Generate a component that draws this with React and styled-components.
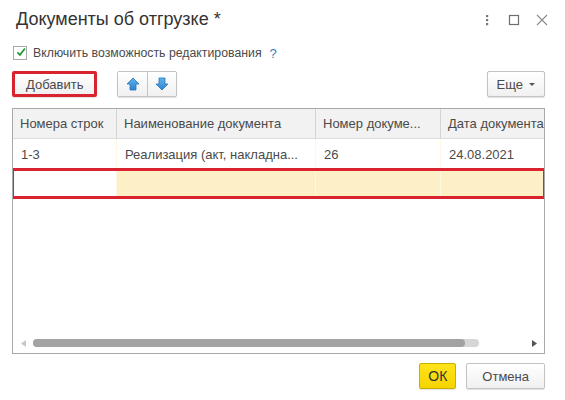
import styled, { createGlobalStyle } from "styled-components";

const Global = createGlobalStyle`
  body {
    margin: 0;
    background: #fff;
    font-family: "Liberation Sans", Arial, sans-serif;
  }
`;

const Dialog = styled.div`
  width: 565px;
  height: 400px;
  box-sizing: border-box;
  padding: 0 20px 0 12px;
  display: flex;
  flex-direction: column;
  background: #fff;
  color: #4a4a4a;
  font-size: 13px;
`;

const TitleBar = styled.div`
  height: 40px;
  display: flex;
  align-items: center;
  justify-content: space-between;
  padding-left: 4px;
`;

const Title = styled.h1`
  margin: 0;
  font-size: 18px;
  font-weight: 400;
  color: #333;
  padding-bottom: 2px;
`;

const WindowIcons = styled.div`
  display: flex;
  align-items: center;
  gap: 14px;
  margin-right: -4px;
  svg {
    display: block;
  }
`;

const CheckRow = styled.label`
  display: flex;
  align-items: center;
  height: 24px;
  gap: 6px;
  margin-top: 1px;
  font-size: 12.3px;
`;

const Box = styled.span`
  width: 12px;
  height: 12px;
  border: 1px solid #a8a8a8;
  background: #fff;
  display: flex;
  align-items: center;
  justify-content: center;
  margin-left: 1px;
`;

const Help = styled.span`
  color: #2d7cc0;
  margin-left: 2px;
  font-size: 13px;
`;

const Toolbar = styled.div`
  display: flex;
  align-items: center;
  height: 26px;
  margin-top: 6px;
`;

const Button = styled.button`
  height: 26px;
  box-sizing: border-box;
  border: ${(p) => (p.$marked ? "3px solid #d9232e" : "1px solid #c3c3c3")};
  border-radius: 2px;
  background: linear-gradient(#ffffff, #f0f0f0);
  box-shadow: 0 1px 1px rgba(0, 0, 0, 0.12);
  font-family: inherit;
  font-size: 13px;
  color: #4a4a4a;
  padding: 0 ${(p) => (p.$marked ? "11px" : "9px")};
  display: flex;
  align-items: center;
  gap: 6px;
  cursor: pointer;
`;

const Group = styled.div`
  display: flex;
  margin-left: 20px;
  height: 24px;
  border: 1px solid #c3c3c3;
  border-radius: 2px;
  box-shadow: 0 1px 1px rgba(0, 0, 0, 0.12);
`;

const IconBtn = styled.button`
  width: 29px;
  border: none;
  background: linear-gradient(#ffffff, #f0f0f0);
  padding: 0;
  display: flex;
  align-items: center;
  justify-content: center;
  & + & {
    border-left: 1px solid #c3c3c3;
  }
`;

const Spacer = styled.div`
  flex: 1;
`;

const Table = styled.div`
  margin-top: 11px;
  height: 246px;
  box-sizing: border-box;
  border: 1px solid #a9a9a9;
  display: flex;
  flex-direction: column;
  overflow: hidden;
`;

const cols = "103px 199px 125px 110px";

const HeadRow = styled.div`
  display: grid;
  grid-template-columns: ${cols};
  height: 29px;
  background: #f2f2f2;
  border-bottom: 1px solid #dcdcdc;
`;

const HeadCell = styled.div`
  display: flex;
  align-items: center;
  padding-left: 7px;
  white-space: nowrap;
  overflow: hidden;
  & + & {
    border-left: 1px solid #d4d4d4;
  }
`;

const Row = styled.div`
  display: grid;
  grid-template-columns: ${cols};
  height: 30px;
  position: relative;
  ${(p) =>
    p.$marked &&
    `
    height: 29px;
    outline: 3px solid #d9232e;
    outline-offset: -2px;
    margin: 0 -1px;
    grid-template-columns: 104px 199px 125px 110px;
  `}
`;

const Cell = styled.div`
  display: flex;
  align-items: center;
  padding-left: 8px;
  white-space: nowrap;
  overflow: hidden;
  background: ${(p) => (p.$yellow ? "#fdf0c6" : "#fff")};
  & + & {
    border-left: 1px solid ${(p) => (p.$yellow ? "#fff8e2" : "#fff")};
  }
`;

const Body = styled.div`
  flex: 1;
`;

const Scroll = styled.div`
  height: 20px;
  display: flex;
  align-items: center;
  padding: 0 7px 0 8px;
  gap: 7px;
`;

const Track = styled.div`
  flex: 1;
  height: 8px;
  margin-right: 46px;
  border-radius: 4px;
  background: #d6d6d6;
  display: flex;
`;

const Thumb = styled.div`
  width: 432px;
  height: 8px;
  border-radius: 4px;
  background: #a3a3a3;
`;

const Footer = styled.div`
  display: flex;
  justify-content: flex-end;
  gap: 10px;
  margin-top: 9px;
`;

const FooterBtn = styled(Button)`
  height: 26px;
  padding: 0 ${(p) => (p.$primary ? "8px" : "15px")};
  font-size: ${(p) => (p.$primary ? "14px" : "13px")};
  ${(p) =>
    p.$primary &&
    `
    background: linear-gradient(#ffe31a, #f5d400);
    border-color: #c9b000;
    color: #333;
  `}
`;

const Arrow = ({ down }) => (
  <svg width="14" height="14" viewBox="0 0 14 14">
    <defs>
      <linearGradient id={down ? "gd" : "gu"} x1="0" y1="0" x2="0" y2="1">
        <stop offset="0" stopColor="#63b4ec" />
        <stop offset="1" stopColor="#2a83cf" />
      </linearGradient>
    </defs>
    <polygon
      points={down ? "4,1 10,1 10,7 13,7 7,13 1,7 4,7" : "7,1 13,7 10,7 10,13 4,13 4,7 1,7"}
      fill={`url(#${down ? "gd" : "gu"})`}
      stroke="#2376bd"
      strokeWidth="0.8"
    />
  </svg>
);

export default function App() {
  return (
    <>
      <Global />
      <Dialog>
        <TitleBar>
          <Title>Документы об отгрузке *</Title>
          <WindowIcons>
            <svg width="12" height="14" viewBox="0 0 12 14">
              <rect x="5" y="2" width="2.2" height="2.2" fill="#777" />
              <rect x="5" y="6" width="2.2" height="2.2" fill="#777" />
              <rect x="5" y="10" width="2.2" height="2.2" fill="#777" />
            </svg>
            <svg width="14" height="14" viewBox="0 0 14 14">
              <rect x="2.5" y="2.5" width="9" height="9" fill="none" stroke="#6e6e6e" strokeWidth="1.2" />
            </svg>
            <svg width="14" height="14" viewBox="0 0 14 14">
              <path d="M2 2 L12 12 M12 2 L2 12" stroke="#8a8a8a" strokeWidth="1.1" />
            </svg>
          </WindowIcons>
        </TitleBar>

        <CheckRow>
          <Box>
            <svg width="14" height="14" viewBox="0 0 14 14" style={{ marginTop: -3, marginLeft: 2 }}>
              <path d="M2 7.5 L5.5 11 L12.5 2" fill="none" stroke="#1e9a3c" strokeWidth="2.4" />
            </svg>
          </Box>
          Включить возможность редактирования
          <Help>?</Help>
        </CheckRow>

        <Toolbar>
          <Button $marked>Добавить</Button>
          <Group>
            <IconBtn>
              <Arrow />
            </IconBtn>
            <IconBtn>
              <Arrow down />
            </IconBtn>
          </Group>
          <Spacer />
          <Button>
            Еще
            <svg width="6" height="3" viewBox="0 0 6 3">
              <polygon points="0,0 6,0 3,3" fill="#555" />
            </svg>
          </Button>
        </Toolbar>

        <Table>
          <HeadRow>
            <HeadCell>Номера строк</HeadCell>
            <HeadCell>Наименование документа</HeadCell>
            <HeadCell>Номер докуме...</HeadCell>
            <HeadCell>Дата документа</HeadCell>
          </HeadRow>
          <Row>
            <Cell>1-3</Cell>
            <Cell>Реализация (акт, накладна...</Cell>
            <Cell>26</Cell>
            <Cell>24.08.2021</Cell>
          </Row>
          <Row $marked>
            <Cell />
            <Cell $yellow />
            <Cell $yellow />
            <Cell $yellow />
          </Row>
          <Body />
          <Scroll>
            <svg width="5" height="7" viewBox="0 0 5 7">
              <polygon points="5,0 5,7 0,3.5" fill="#c8c8c8" />
            </svg>
            <Track>
              <Thumb />
            </Track>
            <svg width="5" height="7" viewBox="0 0 5 7">
              <polygon points="0,0 0,7 5,3.5" fill="#555" />
            </svg>
          </Scroll>
        </Table>

        <Footer>
          <FooterBtn $primary>ОК</FooterBtn>
          <FooterBtn>Отмена</FooterBtn>
        </Footer>
      </Dialog>
    </>
  );
}
